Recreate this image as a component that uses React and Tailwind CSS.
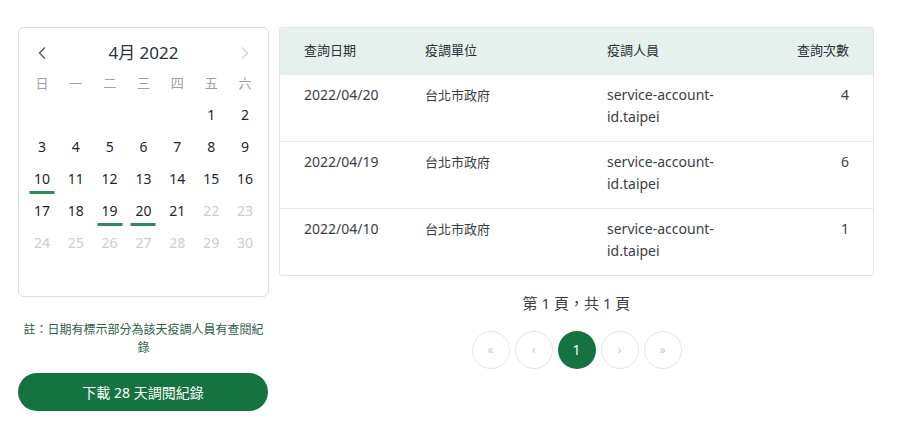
import React from 'react';
import { ChevronLeft, ChevronRight } from 'lucide-react';

const font = { fontFamily: '"Noto Sans", "Noto Sans CJK TC", sans-serif' };

const weekDays = ['日', '一', '二', '三', '四', '五', '六'];
const marked = [10, 19, 20];

const rows = [
    { date: '2022/04/20', unit: '台北市政府', user: 'service-account-id.taipei', count: 4 },
    { date: '2022/04/19', unit: '台北市政府', user: 'service-account-id.taipei', count: 6 },
    { date: '2022/04/10', unit: '台北市政府', user: 'service-account-id.taipei', count: 1 },
];

const Calendar = () => {
    // April 2022 starts on Friday
    const cells = [];
    for (let i = 0; i < 5; i++) cells.push(null);
    for (let d = 1; d <= 30; d++) cells.push(d);

    return (
        <div className="h-[270px] rounded-md border border-[#d9dce0] px-[6px] pt-[13px]">
            <div className="flex h-6 items-center justify-between px-[7px]">
                <ChevronLeft size={20} strokeWidth={2} className="text-[#5b6470]" />
                <span className="text-[17px] text-[#2d3340]">4月 2022</span>
                <ChevronRight size={20} strokeWidth={2} className="text-[#d4d8dd]" />
            </div>
            <div className="mt-[5px] grid h-[28px] grid-cols-7 items-center text-center text-[13px] text-[#9aa1ab]">
                {weekDays.map((w) => (
                    <span key={w}>{w}</span>
                ))}
            </div>
            <div className="grid grid-cols-7">
                {cells.map((d, i) => (
                    <div key={i} className="relative flex h-8 items-center justify-center text-[14px]">
                        {d && (
                            <span className={d > 21 ? 'text-[#c9ced5]' : 'text-[#1f2530]'}>{d}</span>
                        )}
                        {marked.includes(d) && (
                            <span className="absolute bottom-0 left-1/2 h-[3px] w-[25px] -translate-x-1/2 bg-[#2f8a5b]" />
                        )}
                    </div>
                ))}
            </div>
        </div>
    );
};

const App = () => {
    return (
        <div className="flex gap-[10px] bg-white pl-[18px] pt-[27px]" style={font}>
            {/* Left side */}
            <div className="w-[251px]">
                <Calendar />
                <p className="mt-[24px] px-[3px] text-center text-[12px] leading-[18px] text-[#2d6047]">
                    註：日期有標示部分為該天疫調人員有查閱紀錄
                </p>
                <button className="mt-[16px] h-[38px] w-[250px] rounded-full bg-[#15733f] text-[14px] text-white">
                    下載 28 天調閱紀錄
                </button>
            </div>

            {/* Right side */}
            <div className="w-[595px]">
                <div className="overflow-hidden rounded-[3px] border border-[#e2e5e8]">
                    <div className="grid h-[46px] grid-cols-[121px_182px_140px_1fr] items-center bg-[#e6f0ec] px-6 text-[13px] text-[#2d3136]">
                        <span>查詢日期</span>
                        <span>疫調單位</span>
                        <span>疫調人員</span>
                        <span className="text-right">查詢次數</span>
                    </div>
                    {rows.map((r, i) => (
                        <div
                            key={i}
                            className="grid h-[67px] grid-cols-[121px_182px_140px_1fr] border-t border-[#e6e8eb] px-6 pt-[9px] text-[14px] leading-[22px] text-[#3a3f45]"
                        >
                            <span>{r.date}</span>
                            <span className="text-[13px]">{r.unit}</span>
                            <span>{r.user}</span>
                            <span className="text-right">{r.count}</span>
                        </div>
                    ))}
                </div>
                <div className="mt-[16px] text-center text-[15px] text-[#3a3f45]">第 1 頁，共 1 頁</div>
                <div className="mt-[16px] flex justify-center gap-[5px]">
                    {['«', '‹', '1', '›', '»'].map((p) => (
                        <button
                            key={p}
                            className={
                                p === '1'
                                    ? 'flex h-[38px] w-[38px] items-center justify-center rounded-full bg-[#15733f] text-[14px] text-white'
                                    : 'flex h-[38px] w-[38px] items-center justify-center rounded-full border border-[#e2e4e7] text-[12px] text-[#c5c9ce]'
                            }
                        >
                            {p}
                        </button>
                    ))}
                </div>
            </div>
        </div>
    );
};

export default App;
